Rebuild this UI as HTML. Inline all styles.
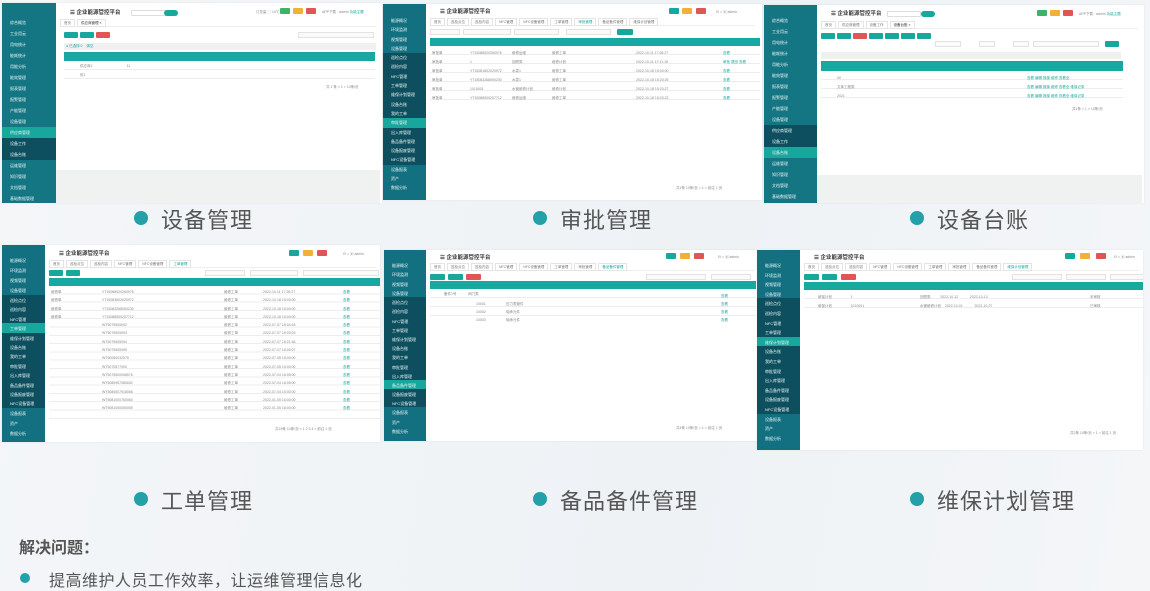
<!DOCTYPE html>
<html><head><meta charset="utf-8">
<style>
*{margin:0;padding:0;box-sizing:border-box}
body{width:1150px;height:591px;overflow:hidden;position:relative;font-family:"Liberation Sans","Noto Sans CJK SC",sans-serif;background:linear-gradient(100deg,#f4f6f8 0%,#eef2f5 60%,#f4f6f8 100%)}
.ss{position:absolute;background:#fff;overflow:hidden;box-shadow:0 0 2px rgba(0,0,0,.08)}
.sb{position:absolute;left:0;top:0;bottom:0;background:#147583;color:#e6f3f3;font-size:4px;line-height:11px}
.sb div{padding-left:8px;white-space:nowrap;height:11px}
.sb .sub{background:#0d4f5e}
.sb .act{background:#17a79d}
.main{position:absolute;top:0;bottom:0;right:0;background:#fff}
.hd{position:absolute;left:0;right:0;top:0;height:16px;font-size:5.5px;font-weight:bold;color:#333;padding:5px 0 0 14px;white-space:nowrap}
.tabs{position:absolute;left:4px;right:4px;top:16px;height:8px;font-size:3.5px;color:#777;white-space:nowrap;border-bottom:1px solid #eee}
.tabs span{display:inline-block;border:1px solid #e4e4e4;padding:0 3px;margin-right:2px;line-height:6px}
.btn{position:absolute;height:6px;background:#17a79d;border-radius:1px}
.red{background:#e05555}
.inp{position:absolute;height:6px;border:1px solid #e2e2e2;background:#fafafa}
.th{position:absolute;height:9px;background:#17a9a0}
.tb{position:absolute;background:repeating-linear-gradient(#fff 0 8px,#eceeee 8px 9px)}
.gray{position:absolute;left:0;right:0;bottom:0;background:#f0f2f2}
.bd{position:absolute;height:6px;border-radius:1px}
.cap{position:absolute;font-size:22px;color:#555;white-space:nowrap;letter-spacing:1px;font-family:"Liberation Sans","Noto Sans CJK SC",sans-serif}
.dot{position:absolute;width:14px;height:14px;border-radius:50%;background:#23a0a8}
.cell{position:absolute;font-size:3.5px;color:#888;white-space:nowrap}
</style></head><body>

<!-- 1 设备管理 -->
<div class="ss" style="left:2px;top:3px;width:380px;height:200px">
 <div class="sb" style="width:54px;padding-top:14px">
  <div>综合概览</div><div>工业用云</div><div>用电统计</div><div>能耗统计</div><div>用能分析</div><div>能效管理</div><div>报表管理</div><div>报警管理</div><div>产能管理</div><div>设备管理</div>
  <div class="sub act">供应商管理</div><div class="sub">设备工作</div><div class="sub">设备台账</div>
  <div>运维管理</div><div>知识管理</div><div>文档管理</div><div>基础数据管理</div>
 </div>
 <div class="main" style="left:54px;right:2px">
  <div class="hd">☰ 企业能源管控平台</div>
  <div class="bd" style="left:75px;top:7px;width:36px;border:1px solid #ddd"></div>
  <div class="bd" style="left:108px;top:7px;width:14px;background:#17a79d;border-radius:3px"></div>
  <div class="bd" style="left:224px;top:5px;width:10px;background:#3bb46a"></div>
  <div class="bd" style="left:237px;top:5px;width:10px;background:#f0b03a"></div>
  <div class="bd" style="left:250px;top:5px;width:10px;background:#e05555"></div>
  <div class="cell" style="left:200px;top:7px">订总量 ◯ 14℃</div>
  <div class="cell" style="left:266px;top:7px">APP下载 · admin <span style="color:#17a79d">功能主题</span></div>
  <div class="tabs"><span>首页</span><span style="color:#333">供应商管理 ×</span></div>
  <div class="btn" style="left:8px;top:29px;width:14px"></div><div class="btn" style="left:24px;top:29px;width:14px"></div><div class="btn red" style="left:40px;top:29px;width:14px"></div>
  <div class="inp" style="left:242px;top:29px;width:76px"></div>
  <div style="position:absolute;left:8px;top:40px;width:312px;height:7px;background:#f0f0f0"></div>
  <div class="cell" style="left:10px;top:41px;color:#17a79d">● 已选择 0 &nbsp;&nbsp; 清空</div>
  <div class="th" style="left:8px;top:49px;width:311px"></div>
  <div class="tb" style="left:8px;top:58px;width:311px;height:18px"></div>
  <div class="cell" style="left:24px;top:61px">供应商1 &nbsp;&nbsp;&nbsp;&nbsp;&nbsp;&nbsp;&nbsp;&nbsp;&nbsp;&nbsp;&nbsp;&nbsp;&nbsp;&nbsp;&nbsp;&nbsp;&nbsp;&nbsp;&nbsp;&nbsp;&nbsp;&nbsp;&nbsp;&nbsp;&nbsp;&nbsp;&nbsp;&nbsp;&nbsp;&nbsp;&nbsp;&nbsp;&nbsp;&nbsp;11</div>
  <div class="cell" style="left:24px;top:70px">供1</div>
  <div class="cell" style="left:270px;top:82px">共 1 条 &lt; 1 &gt; 10条/页</div>
  <div class="gray" style="height:33px"></div>
 </div>
</div>

<!-- 2 审批管理 -->
<div class="ss" style="left:383px;top:4px;width:379px;height:196px">
 <div class="sb" style="width:43px;padding-top:12px;line-height:9.3px;background:#127080">
  <div style="height:9.3px">能源概况</div><div style="height:9.3px">环境监测</div><div style="height:9.3px">视频管理</div><div style="height:9.3px">设备管理</div>
  <div class="sub" style="height:9.3px">巡检点位</div><div class="sub" style="height:9.3px">巡检内容</div><div class="sub" style="height:9.3px">NFC管理</div><div class="sub" style="height:9.3px">工单管理</div><div class="sub" style="height:9.3px">维保计划管理</div><div class="sub" style="height:9.3px">设备台账</div><div class="sub" style="height:9.3px">我的工单</div><div class="sub act" style="height:9.3px">审批管理</div><div class="sub" style="height:9.3px">出入库管理</div><div class="sub" style="height:9.3px">备品备件管理</div><div class="sub" style="height:9.3px">设备报废管理</div><div class="sub" style="height:9.3px">NFC设备管理</div>
  <div style="height:9.3px">设备报表</div><div style="height:9.3px">资产</div><div style="height:9.3px">数据分析</div>
 </div>
 <div class="main" style="left:43px;right:3px">
  <div class="hd" style="padding-top:3px">☰ 企业能源管控平台</div>
  <div class="bd" style="left:243px;top:4px;width:10px;background:#17a79d"></div>
  <div class="bd" style="left:256px;top:4px;width:10px;background:#f0b03a"></div>
  <div class="bd" style="left:270px;top:4px;width:10px;background:#e05555"></div>
  <div class="cell" style="left:290px;top:6px">⊟ ⌂ ▣ admin</div>
  <div class="tabs" style="top:14px"><span>首页</span><span>巡检点位</span><span>巡检内容</span><span>NFC管理</span><span>NFC设备管理</span><span>工单管理</span><span style="color:#17a79d">审批管理</span><span>备品备件管理</span><span>维保计划管理</span></div>
  <div class="inp" style="left:4px;top:25px;width:30px"></div><div class="inp" style="left:37px;top:25px;width:48px"></div><div class="inp" style="left:88px;top:25px;width:45px"></div><div class="inp" style="left:140px;top:25px;width:45px"></div>
  <div class="btn" style="left:191px;top:25px;width:16px"></div>
  <div class="th" style="left:4px;top:34px;width:330px;height:8px"></div>
  <div class="tb" style="left:4px;top:42px;width:330px;height:54px"></div>
  <div class="cell" style="left:6px;top:45px;line-height:9px">审批单<br>审批单<br>审批单<br>审批单<br>审批单<br>审批单</div>
  <div class="cell" style="left:44px;top:45px;line-height:9px">YT15088520260976<br>1<br>YT15081802020972<br>YT15083268050230<br>1010001<br>YT15088500207712</div>
  <div class="cell" style="left:86px;top:45px;line-height:9px">维修运维<br>回顾类<br>水泵1<br>水泵1<br>水管维修计划<br>维修运维</div>
  <div class="cell" style="left:126px;top:45px;line-height:9px">维修工单<br>维修计划<br>维修工单<br>维修工单<br>维修计划<br>维修工单</div>
  <div class="cell" style="left:210px;top:45px;line-height:9px">2022-10-11 17:26:27<br>2022-10-11 17:11:15<br>2022-10-18 15:00:00<br>2022-10-18 15:20:25<br>2022-10-18 15:20:27<br>2022-10-18 15:03:22</div>
  <div class="cell" style="left:297px;top:45px;line-height:9px;color:#17a79d">查看<br>审批 退回 查看<br>查看<br>查看<br>查看<br>查看</div>
  <div class="cell" style="left:250px;top:182px">共1条 10条/页 &lt; 1 &gt; 前往 1 页</div>
 </div>
</div>

<!-- 3 设备台账 -->
<div class="ss" style="left:764px;top:5px;width:380px;height:198px">
 <div class="sb" style="width:53px;padding-top:10px">
  <div>综合概览</div><div>工业用云</div><div>用电统计</div><div>能耗统计</div><div>用能分析</div><div>能效管理</div><div>报表管理</div><div>报警管理</div><div>产能管理</div><div>设备管理</div>
  <div class="sub">供应商管理</div><div class="sub">设备工作</div><div class="sub act">设备台账</div>
  <div>运维管理</div><div>知识管理</div><div>文档管理</div><div>基础数据管理</div>
 </div>
 <div class="main" style="left:53px;right:2px">
  <div class="hd" style="padding-top:4px">☰ 企业能源管控平台</div>
  <div class="bd" style="left:70px;top:6px;width:34px;border:1px solid #ddd"></div>
  <div class="bd" style="left:104px;top:6px;width:14px;background:#17a79d;border-radius:3px"></div>
  <div class="bd" style="left:220px;top:5px;width:10px;background:#3bb46a"></div>
  <div class="bd" style="left:233px;top:5px;width:10px;background:#f0b03a"></div>
  <div class="bd" style="left:246px;top:5px;width:10px;background:#e05555"></div>
  <div class="cell" style="left:262px;top:7px">APP下载 · admin <span style="color:#17a79d">功能主题</span></div>
  <div class="tabs"><span>首页</span><span>供应商管理</span><span>设备工作</span><span style="color:#333">设备台账 ×</span></div>
  <div class="btn" style="left:4px;top:28px;width:14px"></div><div class="btn" style="left:20px;top:28px;width:14px"></div><div class="btn red" style="left:36px;top:28px;width:14px"></div><div class="btn" style="left:52px;top:28px;width:14px"></div><div class="btn" style="left:68px;top:28px;width:14px"></div><div class="btn" style="left:84px;top:28px;width:14px"></div><div class="btn" style="left:100px;top:28px;width:14px"></div>
  <div class="inp" style="left:118px;top:36px;width:26px"></div><div class="inp" style="left:162px;top:36px;width:16px"></div><div class="inp" style="left:196px;top:36px;width:16px"></div><div class="inp" style="left:216px;top:36px;width:66px"></div>
  <div class="btn" style="left:288px;top:36px;width:14px"></div>
  <div style="position:absolute;left:4px;top:47px;width:300px;height:7px;background:#f0f0f0"></div>
  <div class="th" style="left:4px;top:56px;width:302px;height:10px"></div>
  <div class="tb" style="left:4px;top:66px;width:302px;height:27px"></div>
  <div class="cell" style="left:20px;top:69px;line-height:9px">00<br>文体工程类<br>2021</div>
  <div class="cell" style="left:210px;top:69px;line-height:9px;color:#17a79d">查看 编辑 报废 维修 查看全</div>
  <div class="cell" style="left:210px;top:78px;line-height:9px;color:#17a79d">查看 编辑 报废 维修 查看全 维保记录</div>
  <div class="cell" style="left:210px;top:87px;line-height:9px;color:#17a79d">查看 编辑 报废 维修 查看全 维保记录</div>
  <div class="cell" style="left:255px;top:102px">共1条 &lt; 1 &gt; 10条/页</div>
  <div class="gray" style="height:28px"></div>
 </div>
</div>

<!-- 4 工单管理 -->
<div class="ss" style="left:2px;top:245px;width:378px;height:197px">
 <div class="sb" style="width:43px;padding-top:10px;background:#127080">
  <div style="height:10px">能源概况</div><div style="height:10px">环境监测</div><div style="height:10px">视频管理</div><div style="height:10px">设备管理</div>
  <div class="sub" style="height:9.4px">巡检点位</div><div class="sub" style="height:9.4px">巡检内容</div><div class="sub" style="height:9.4px">NFC管理</div><div class="sub act" style="height:9.4px">工单管理</div><div class="sub" style="height:9.4px">维保计划管理</div><div class="sub" style="height:9.4px">设备台账</div><div class="sub" style="height:9.4px">我的工单</div><div class="sub" style="height:9.4px">审批管理</div><div class="sub" style="height:9.4px">出入库管理</div><div class="sub" style="height:9.4px">备品备件管理</div><div class="sub" style="height:9.4px">设备报废管理</div><div class="sub" style="height:9.4px">NFC设备管理</div>
  <div style="height:10px">设备报表</div><div style="height:10px">资产</div><div style="height:10px">数据分析</div>
 </div>
 <div class="main" style="left:43px;right:0">
  <div class="hd" style="padding-top:4px">☰ 企业能源管控平台</div>
  <div class="bd" style="left:244px;top:5px;width:10px;background:#17a79d"></div>
  <div class="bd" style="left:258px;top:5px;width:10px;background:#f0b03a"></div>
  <div class="bd" style="left:272px;top:5px;width:10px;background:#e05555"></div>
  <div class="cell" style="left:298px;top:7px">⊟ ⌂ ▣ admin</div>
  <div class="tabs" style="top:15px"><span>首页</span><span>巡检点位</span><span>巡检内容</span><span>NFC管理</span><span>NFC设备管理</span><span style="color:#17a79d">工单管理</span></div>
  <div class="btn" style="left:4px;top:25px;width:14px"></div><div class="btn" style="left:21px;top:25px;width:14px"></div>
  <div class="inp" style="left:160px;top:25px;width:40px"></div><div class="inp" style="left:205px;top:25px;width:48px"></div><div class="inp" style="left:258px;top:25px;width:76px"></div>
  <div class="th" style="left:4px;top:33px;width:332px;height:8px"></div>
  <div class="tb" style="left:4px;top:41px;width:332px;height:133px;background:repeating-linear-gradient(#fff 0 7.3px,#eceeee 7.3px 8.3px)"></div>
  <div class="cell" style="left:6px;top:43px;line-height:8.3px">维修单<br>维修单<br>维修单<br>维修单</div>
  <div class="cell" style="left:57px;top:43px;line-height:8.3px">YT15088520260976<br>YT15083802020972<br>YT15083268050230<br>YT15088500207712<br>WT5079505092<br>WT5079505093<br>WT5079505094<br>WT5079505095<br>WT50050032575<br>WT5070577000<br>WT5079500008576<br>WT5080957080652<br>WT5080507918066<br>WT5081000760060<br>WT5081050050059</div>
  <div class="cell" style="left:179px;top:43px;line-height:8.3px">维修工单<br>维修工单<br>维修工单<br>维修工单<br>维修工单<br>维修工单<br>维修工单<br>维修工单<br>维修工单<br>维修工单<br>维修工单<br>维修工单<br>维修工单<br>维修工单<br>维修工单</div>
  <div class="cell" style="left:218px;top:43px;line-height:8.3px">2022-10-11 17:26:27<br>2022-10-18 15:00:00<br>2022-10-18 15:00:00<br>2022-10-18 15:00:00<br>2022-07-07 15:04:18<br>2022-07-07 15:03:03<br>2022-07-07 15:21:46<br>2022-07-07 15:00:07<br>2022-07-05 15:00:00<br>2022-07-05 15:00:00<br>2022-07-04 16:05:00<br>2022-07-04 16:05:00<br>2022-07-04 15:00:00<br>2022-01-05 16:00:00<br>2022-01-05 16:00:00</div>
  <div class="cell" style="left:298px;top:43px;line-height:8.3px;color:#17a79d">查看<br>查看<br>查看<br>查看<br>查看<br>查看<br>查看<br>查看<br>查看<br>查看<br>查看<br>查看<br>查看<br>查看<br>查看</div>
  <div class="cell" style="left:230px;top:182px">共15条 10条/页 &lt; 1 2 3 4 &gt; 前往 1 页</div>
 </div>
</div>

<!-- 5 备品备件管理 -->
<div class="ss" style="left:384px;top:250px;width:374px;height:191px">
 <div class="sb" style="width:42px;padding-top:10px;background:#127080">
  <div style="height:9.3px">能源概况</div><div style="height:9.3px">环境监测</div><div style="height:9.3px">视频管理</div><div style="height:9.3px">设备管理</div>
  <div class="sub" style="height:9.2px">巡检点位</div><div class="sub" style="height:9.2px">巡检内容</div><div class="sub" style="height:9.2px">NFC管理</div><div class="sub" style="height:9.2px">工单管理</div><div class="sub" style="height:9.2px">维保计划管理</div><div class="sub" style="height:9.2px">设备台账</div><div class="sub" style="height:9.2px">我的工单</div><div class="sub" style="height:9.2px">审批管理</div><div class="sub" style="height:9.2px">出入库管理</div><div class="sub act" style="height:9.2px">备品备件管理</div><div class="sub" style="height:9.2px">设备报废管理</div><div class="sub" style="height:9.2px">NFC设备管理</div>
  <div style="height:9.3px">设备报表</div><div style="height:9.3px">资产</div><div style="height:9.3px">数据分析</div>
 </div>
 <div class="main" style="left:42px;right:0">
  <div class="hd" style="padding-top:3px">☰ 企业能源管控平台</div>
  <div class="bd" style="left:240px;top:3px;width:10px;background:#17a79d"></div>
  <div class="bd" style="left:254px;top:3px;width:10px;background:#f0b03a"></div>
  <div class="bd" style="left:268px;top:3px;width:10px;background:#e05555"></div>
  <div class="cell" style="left:292px;top:5px">⊟ ⌂ ▣ admin</div>
  <div class="tabs" style="top:13px"><span>首页</span><span>巡检点位</span><span>巡检内容</span><span>NFC管理</span><span>NFC设备管理</span><span>工单管理</span><span>审批管理</span><span style="color:#17a79d">备品备件管理</span></div>
  <div class="btn" style="left:4px;top:24px;width:15px"></div><div class="btn" style="left:22px;top:24px;width:15px"></div><div class="btn red" style="left:40px;top:24px;width:15px"></div>
  <div class="inp" style="left:220px;top:24px;width:60px"></div><div class="inp" style="left:285px;top:24px;width:40px"></div>
  <div class="th" style="left:4px;top:31px;width:326px;height:8px"></div>
  <div class="tb" style="left:4px;top:39px;width:326px;height:32px"></div>
  <div class="cell" style="left:18px;top:42px">备件1号 &nbsp;&nbsp;&nbsp;&nbsp;&nbsp;&nbsp;&nbsp;&nbsp;&nbsp;&nbsp; 阀门类</div>
  <div class="cell" style="left:50px;top:50px;line-height:8px">10001<br>10002<br>10003</div>
  <div class="cell" style="left:80px;top:50px;line-height:8px">压力表管件<br>轴承元件<br>轴承元件</div>
  <div class="cell" style="left:295px;top:42px;line-height:8px;color:#17a79d">查看<br>查看<br>查看<br>查看</div>
  <div class="cell" style="left:250px;top:176px">共4条 10条/页 &lt; 1 &gt; 前往 1 页</div>
 </div>
</div>

<!-- 6 维保计划管理 -->
<div class="ss" style="left:757px;top:250px;width:386px;height:200px">
 <div class="sb" style="width:43px;padding-top:10px;background:#127080">
  <div style="height:9.6px">能源概况</div><div style="height:9.6px">环境监测</div><div style="height:9.6px">视频管理</div><div style="height:9.6px">设备管理</div>
  <div class="sub" style="height:9.6px">巡检点位</div><div class="sub" style="height:9.6px">巡检内容</div><div class="sub" style="height:9.6px">NFC管理</div><div class="sub" style="height:9.6px">工单管理</div><div class="sub act" style="height:9.6px">维保计划管理</div><div class="sub" style="height:9.6px">设备台账</div><div class="sub" style="height:9.6px">我的工单</div><div class="sub" style="height:9.6px">审批管理</div><div class="sub" style="height:9.6px">出入库管理</div><div class="sub" style="height:9.6px">备品备件管理</div><div class="sub" style="height:9.6px">设备报废管理</div><div class="sub" style="height:9.6px">NFC设备管理</div>
  <div style="height:9.6px">设备报表</div><div style="height:9.6px">资产</div><div style="height:9.6px">数据分析</div>
 </div>
 <div class="main" style="left:43px;right:0;bottom:3px">
  <div class="hd" style="padding-top:3px">☰ 企业能源管控平台</div>
  <div class="bd" style="left:265px;top:3px;width:10px;background:#17a79d"></div>
  <div class="bd" style="left:280px;top:3px;width:10px;background:#f0b03a"></div>
  <div class="bd" style="left:296px;top:3px;width:10px;background:#e05555"></div>
  <div class="cell" style="left:314px;top:5px">⊟ ⌂ ▣ admin</div>
  <div class="tabs" style="top:13px"><span>首页</span><span>巡检点位</span><span>巡检内容</span><span>NFC管理</span><span>NFC设备管理</span><span>工单管理</span><span>审批管理</span><span>备品备件管理</span><span style="color:#17a79d">维保计划管理</span></div>
  <div class="btn" style="left:4px;top:24px;width:15px"></div><div class="btn" style="left:22px;top:24px;width:15px"></div><div class="btn red" style="left:41px;top:24px;width:15px"></div>
  <div class="inp" style="left:212px;top:24px;width:50px"></div><div class="inp" style="left:266px;top:24px;width:40px"></div><div class="inp" style="left:310px;top:24px;width:42px"></div>
  <div class="th" style="left:4px;top:32px;width:340px;height:8px"></div>
  <div class="tb" style="left:4px;top:40px;width:340px;height:18px"></div>
  <div class="cell" style="left:18px;top:43px;line-height:9px">维保计划 &nbsp;&nbsp;&nbsp;&nbsp;&nbsp;&nbsp;&nbsp;&nbsp;&nbsp;&nbsp;&nbsp;&nbsp;&nbsp;&nbsp;&nbsp;&nbsp;&nbsp; 1<br>维保计划 &nbsp;&nbsp;&nbsp;&nbsp;&nbsp;&nbsp;&nbsp;&nbsp;&nbsp;&nbsp;&nbsp;&nbsp;&nbsp;&nbsp;&nbsp;&nbsp;&nbsp; 1010001</div>
  <div class="cell" style="left:120px;top:43px;line-height:9px">回顾类 &nbsp;&nbsp;&nbsp;&nbsp;&nbsp;&nbsp;&nbsp;&nbsp; 2022-10-12 &nbsp;&nbsp;&nbsp;&nbsp;&nbsp;&nbsp;&nbsp;&nbsp;&nbsp;&nbsp; 2022-10-13<br>水管维修计划 &nbsp;&nbsp; 2022-10-01 &nbsp;&nbsp;&nbsp;&nbsp;&nbsp;&nbsp;&nbsp;&nbsp;&nbsp;&nbsp; 2022-10-27</div>
  <div class="cell" style="left:290px;top:43px;line-height:9px">未审核<br>已审核</div>
  <div class="cell" style="left:270px;top:181px">共2条 10条/页 &lt; 1 &gt; 前往 1 页</div>
 </div>
</div>

<!-- captions -->
<div class="dot" style="left:134px;top:211px"></div><div class="cap" style="left:161px;top:203px">设备管理</div>
<div class="dot" style="left:533px;top:211px"></div><div class="cap" style="left:560px;top:203px">审批管理</div>
<div class="dot" style="left:910px;top:211px"></div><div class="cap" style="left:937px;top:203px">设备台账</div>
<div class="dot" style="left:134px;top:492px"></div><div class="cap" style="left:161px;top:484px">工单管理</div>
<div class="dot" style="left:533px;top:492px"></div><div class="cap" style="left:560px;top:484px">备品备件管理</div>
<div class="dot" style="left:910px;top:492px"></div><div class="cap" style="left:937px;top:484px">维保计划管理</div>

<div style="position:absolute;left:19px;top:534px;font-size:16px;font-weight:bold;color:#555">解决问题：</div>
<div class="dot" style="left:20px;top:573px;width:10px;height:10px"></div>
<div style="position:absolute;left:49px;top:567px;font-size:16px;color:#555;letter-spacing:.5px">提高维护人员工作效率，让运维管理信息化</div>
</body></html>
